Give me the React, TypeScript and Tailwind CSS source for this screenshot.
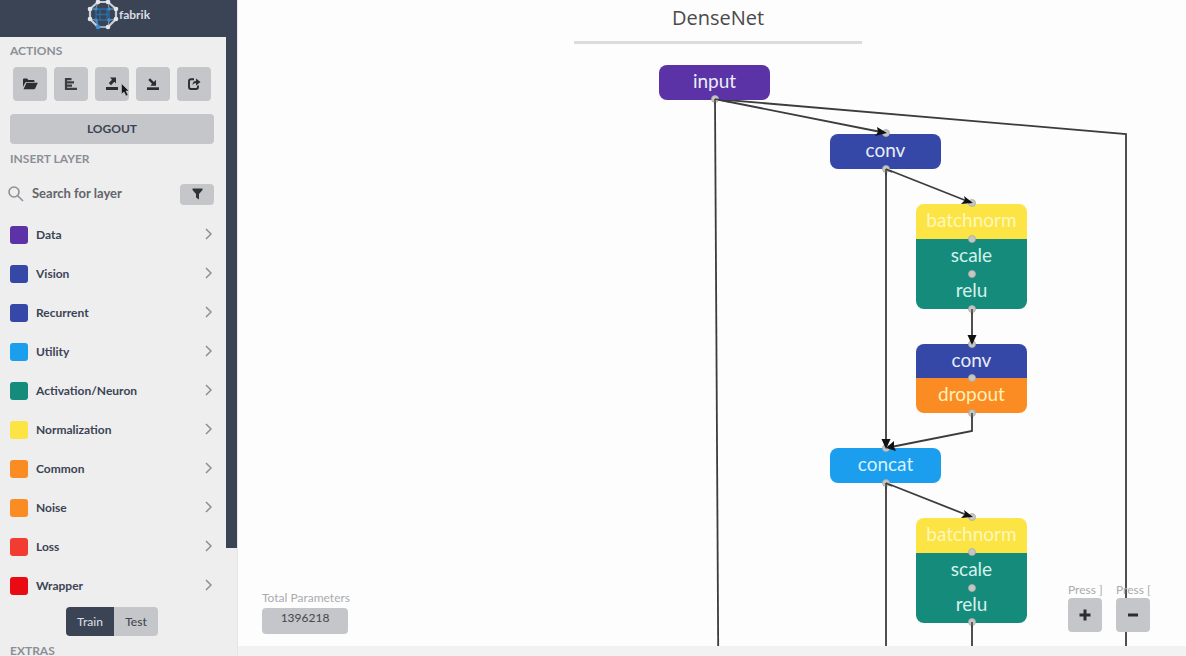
import type { ReactNode } from 'react';

const layers = [
  { name: 'Data', color: 'bg-[#5c33a6]' },
  { name: 'Vision', color: 'bg-[#3648a7]' },
  { name: 'Recurrent', color: 'bg-[#3648a7]' },
  { name: 'Utility', color: 'bg-[#1c9eee]' },
  { name: 'Activation/Neuron', color: 'bg-[#158b7c]' },
  { name: 'Normalization', color: 'bg-[#fbe444]' },
  { name: 'Common', color: 'bg-[#fb8c24]' },
  { name: 'Noise', color: 'bg-[#fb8c24]' },
  { name: 'Loss', color: 'bg-[#f23c32]' },
  { name: 'Wrapper', color: 'bg-[#ea0a14]' },
];

const nodes = [
  { label: 'input', place: 'left-[421px] top-[65px]', look: 'bg-[#5c33a6] rounded-lg text-[#e9eef8]' },
  { label: 'conv', place: 'left-[592px] top-[134px]', look: 'bg-[#3648a7] rounded-lg text-[#e9eef8]' },
  { label: 'batchnorm', place: 'left-[678px] top-[204px]', look: 'bg-[#fbe444] rounded-t-lg text-[#fff7bd]' },
  { label: 'scale', place: 'left-[678px] top-[239px]', look: 'bg-[#158b7c] text-[#d5f1ec]' },
  { label: 'relu', place: 'left-[678px] top-[274px]', look: 'bg-[#158b7c] rounded-b-lg text-[#d5f1ec]' },
  { label: 'conv', place: 'left-[678px] top-[344px]', look: 'bg-[#3648a7] rounded-t-lg text-[#e9eef8]' },
  { label: 'dropout', place: 'left-[678px] top-[378px]', look: 'bg-[#fb8c24] rounded-b-lg text-[#fff0b8]' },
  { label: 'concat', place: 'left-[592px] top-[448px]', look: 'bg-[#1c9eee] rounded-lg text-[#d8f1ff]' },
  { label: 'batchnorm', place: 'left-[678px] top-[518px]', look: 'bg-[#fbe444] rounded-t-lg text-[#fff7bd]' },
  { label: 'scale', place: 'left-[678px] top-[553px]', look: 'bg-[#158b7c] text-[#d5f1ec]' },
  { label: 'relu', place: 'left-[678px] top-[588px]', look: 'bg-[#158b7c] rounded-b-lg text-[#d5f1ec]' },
];

const ports = [
  [477, 99], [648, 133], [648, 169], [734, 203], [734, 239], [734, 274], [734, 309],
  [734, 344], [734, 378], [734, 413], [648, 448], [648, 483], [734, 517], [734, 552],
  [734, 588], [734, 622],
];

function Logo() {
  return (
    <svg width="32" height="32" viewBox="0 0 32 32" fill="none" aria-hidden="true">
      <path d="M9 10H22V21H9ZM9 15.500H22M10 21L11 27M13 10V21M20 10V21" stroke="#2a6ba6" strokeWidth="1.300" />
      <path d="M11 3H21L29 10V20L21 28M11 28L3 20V10L11 3" stroke="#c9ced6" strokeWidth="2.200" />
      <path d="M11 28H21" stroke="#9fb4c9" strokeWidth="1.800" />
      <path d="M11 3L9 10L3 10M21 3L22 10L29 10M3 20L9 21L11 28M29 20L22 21L21 28" stroke="#8c97a6" strokeWidth="1" />
      <g fill="#e4e7eb">
        <circle cx="11" cy="3" r="2.300" /><circle cx="21" cy="3" r="2.300" />
        <circle cx="29" cy="10" r="2.300" /><circle cx="29" cy="20" r="2.300" />
        <circle cx="21" cy="28" r="2.300" /><circle cx="3" cy="20" r="2.300" /><circle cx="3" cy="10" r="2.300" />
      </g>
      <g fill="#3192d8">
        <circle cx="9" cy="10" r="1.700" /><circle cx="22" cy="10" r="1.700" />
        <circle cx="9" cy="21" r="1.700" /><circle cx="22" cy="21" r="1.700" /><circle cx="11" cy="28" r="2.300" />
      </g>
    </svg>
  );
}

function FolderIcon() {
  return (
    <svg width="16" height="14" viewBox="0 0 16 14" fill="#2b2d31" aria-hidden="true">
      <path d="M1 10V2.500Q1 1.500 2 1.500H5L6.500 3H11.500Q12.500 3 12.500 4V5H4.500Q3.500 5 3 6Z" />
      <path d="M4.500 5.700H15.800L13.200 11.500Q12.800 12.300 12 12.300H1.500Z" />
    </svg>
  );
}

function AlignIcon() {
  return (
    <svg width="14" height="14" viewBox="0 0 14 14" fill="none" stroke="#3b3d41" strokeWidth="2.200" aria-hidden="true">
      <path d="M2 1V13M2 2.200H7.500M2 5.400H10M2 8.600H8M2 11.800H13" />
    </svg>
  );
}

function ExportIcon() {
  return (
    <svg width="14" height="14" viewBox="0 0 14 14" aria-hidden="true">
      <path d="M1 10H13V13H1Z" fill="#2b2d31" />
      <path d="M5 0.500H11V6.500L9.300 4.800L6 8.200L3.800 6L7 2.700Z" fill="#2b2d31" />
    </svg>
  );
}

function ImportIcon() {
  return (
    <svg width="14" height="14" viewBox="0 0 14 14" aria-hidden="true">
      <path d="M1 10.300H13V13H1Z" fill="#2b2d31" />
      <path d="M10 8.800H4.300L6 6.700L2.300 2.900L4 1.200L7.900 5L10 2.800Z" fill="#2b2d31" />
    </svg>
  );
}

function ShareIcon() {
  return (
    <svg width="14" height="14" viewBox="0 0 14 14" aria-hidden="true">
      <path d="M7 2.300H4Q2 2.300 2 4.300V10Q2 12 4 12H9Q11 12 11 10V8.500" fill="none" stroke="#2b2d31" strokeWidth="1.900" />
      <path d="M5.500 8Q5.500 4 9 4V1.500L13.500 5L9 8.500V6Q6.500 6 5.500 8Z" fill="#2b2d31" />
    </svg>
  );
}

function ActionButton({ label, children }: { label: string; children: ReactNode }) {
  return (
    <button
      type="button"
      aria-label={label}
      className="flex size-[34px] items-center justify-center rounded bg-[#c5c6ca]"
    >
      {children}
    </button>
  );
}

function Pointer() {
  return (
    <svg className="pointer-events-none absolute left-[121px] top-[83px]" width="9" height="14" viewBox="0 0 9 14" aria-hidden="true">
      <path d="M0.500 0.500L8 8H5L7 12L5 13L3 9L0.500 11Z" fill="#16181b" stroke="#d8d8da" strokeWidth="0.500" />
    </svg>
  );
}

function Sidebar() {
  return (
    <aside className="relative flex w-[238px] shrink-0 flex-col overflow-hidden border-r border-[#e6e6e6] bg-[#eeeeee] text-[#3b4454]">
      <header className="flex h-[37px] shrink-0 items-center justify-center bg-[#3b4454] pb-2 text-xs font-bold text-[#d9dde3]">
        <Logo />
        <span>fabrik</span>
      </header>
      <div className="flex min-h-0 grow">
        <div className="grow pl-2.5 pr-3">
          <h2 className="mt-1.5 text-xs font-bold leading-4 text-[#8b8f97]">ACTIONS</h2>
          <div className="mt-2 flex justify-between px-[3px]">
            <ActionButton label="Open"><FolderIcon /></ActionButton>
            <ActionButton label="Models"><AlignIcon /></ActionButton>
            <ActionButton label="Export"><ExportIcon /></ActionButton>
            <ActionButton label="Import"><ImportIcon /></ActionButton>
            <ActionButton label="Share"><ShareIcon /></ActionButton>
          </div>
          <button type="button" className="mt-[13px] h-[30px] w-full rounded bg-[#c5c6ca] text-xs font-bold">
            LOGOUT
          </button>
          <h2 className="mt-[7px] text-xs font-bold leading-4 text-[#8b8f97]">INSERT LAYER</h2>
          <div className="mt-4 flex h-[22px] items-center">
            <svg className="-ml-0.5 shrink-0" width="16" height="16" viewBox="0 0 16 16" fill="none" stroke="#8b8f97" strokeWidth="1.6" aria-hidden="true">
              <circle cx="6" cy="6" r="5" />
              <path d="M9.700 9.700L15 15" />
            </svg>
            <input
              type="text"
              aria-label="Search for layer"
              placeholder="Search for layer"
              className="ml-2 w-0 grow bg-transparent text-[13px] font-bold outline-none placeholder:text-[#62656b]"
            />
            <button type="button" aria-label="Filter" className="flex h-[21px] w-[34px] items-center justify-center rounded bg-[#c5c6ca]">
              <svg width="11" height="12" viewBox="0 0 11 12" fill="#303236" aria-hidden="true">
                <path d="M0.500 0.500H10.500V2L7 6V11.500L4 9.500V6L0.500 2Z" />
              </svg>
            </button>
          </div>
          <ul className="mt-2.5">
            {layers.map((layer) => (
              <li key={layer.name}>
                <button type="button" className="flex h-[39px] w-full items-center text-left text-xs font-bold">
                  <span className={`mr-2 size-[18px] rounded-[3px] ${layer.color}`} />
                  {layer.name}
                  <svg className="ml-auto mr-0.5" width="7" height="14" viewBox="0 0 7 14" fill="none" stroke="#8b8f97" strokeWidth="1.500" aria-hidden="true">
                    <path d="M1 1L6 6L1 11" />
                  </svg>
                </button>
              </li>
            ))}
          </ul>
          <div className="mt-0.5 flex justify-center text-xs font-medium">
            <button type="button" className="h-[29px] w-12 rounded-l bg-[#3b4454] text-[#d7dae0]">Train</button>
            <button type="button" className="h-[29px] w-11 rounded-r bg-[#c5c6ca] text-[#44474c]">Test</button>
          </div>
          <h2 className="mt-[7px] text-xs font-bold leading-4 text-[#8b8f97]">EXTRAS</h2>
        </div>
        <div className="h-[511px] w-[11px] shrink-0 bg-[#3b4454]" />
      </div>
      <Pointer />
    </aside>
  );
}

function Graph() {
  return (
    <>
      <svg className="absolute left-0 top-0 h-full w-[948px]" aria-hidden="true">
        <g fill="none" stroke="#3c3c3c" strokeWidth="1.800">
          <path d="M477 99L480.500 700" />
          <path d="M477 99L888 134V700" />
          <path d="M648 483V700" />
          <path d="M734 622V700" />
          <path d="M477 99L648 133" />
          <path d="M648 169V448" />
          <path d="M648 169L734 203" />
          <path d="M734 309V344" />
          <path d="M734 413V431L648 448" />
          <path d="M648 483L734 517" />
        </g>
      </svg>
      {nodes.map((node) => (
        <div
          key={node.place}
          className={`absolute flex h-[35px] w-[111px] items-center justify-center pb-1 text-[19px] leading-6 ${node.place} ${node.look}`}
        >
          {node.label}
        </div>
      ))}
      <svg className="absolute left-0 top-0 h-full w-[948px]" aria-hidden="true">
        {ports.map(([x, y]) => (
          <circle key={`${x}-${y}`} cx={x} cy={y} r="3.500" fill="#c6c6c3" stroke="#aaaaaa" strokeWidth="0.800" />
        ))}
        <g fill="#111">
          <path d="M639 127L649 133L637 136L640 132Z" />
          <path d="M726 196L735 203L723 204L727 200Z" />
          <path d="M726 510L735 517L723 518L727 514Z" />
          <path d="M729.500 335H738.500L734 345Z" />
          <path d="M643.500 439H652.500L648 449Z" />
          <path d="M656 441L648 448L658 451L656 447Z" />
        </g>
        <g fill="none" stroke="#3c3c3c" strokeWidth="1.500">
          <path d="M477 99V104M477 99L492 102M648 169V175M648 169L654 172M734 309V314M734 413V418M648 483V489M648 483L654 486M734 622V627" />
        </g>
      </svg>
    </>
  );
}

function ZoomControl({ hint, label, children }: { hint: string; label: string; children: ReactNode }) {
  return (
    <div className="flex w-9 flex-col">
      <span className="whitespace-nowrap text-xs leading-4 text-[#a9abaf]">{hint}</span>
      <button type="button" aria-label={label} className="flex size-[34px] items-center justify-center rounded bg-[#c5c6ca]">
        {children}
      </button>
    </div>
  );
}

export default function App() {
  return (
    <div className="flex h-screen overflow-hidden bg-[#f2f2f2] font-['Lato',sans-serif]">
      <Sidebar />
      <main className="relative mb-2.5 min-w-0 grow overflow-hidden bg-[#fdfdfd]">
        <h1 className="mx-auto w-[288px] translate-x-1.5 border-b-3 border-[#dcdcdc] pb-2.5 pt-1 text-center font-['Open_Sans',sans-serif] text-xl leading-[27px] text-[#4a4a4a]">
          DenseNet
        </h1>
        <Graph />
        <div className="absolute bottom-3 left-6 w-[86px]">
          <div className="whitespace-nowrap text-xs leading-4 text-[#a9abaf]">Total Parameters</div>
          <output className="mt-0.5 block h-[26px] rounded bg-[#c5c6ca] text-center text-xs leading-5 text-[#44474c]">
            1396218
          </output>
        </div>
        <div className="absolute bottom-3.5 right-[34px] flex gap-3">
          <ZoomControl hint="Press ]" label="Zoom in">
            <svg width="12" height="12" viewBox="0 0 12 12" stroke="#2b2d31" strokeWidth="3" aria-hidden="true">
              <path d="M6 0.500V11.500M0.500 6H11.500" />
            </svg>
          </ZoomControl>
          <ZoomControl hint="Press [" label="Zoom out">
            <svg width="12" height="12" viewBox="0 0 12 12" stroke="#2b2d31" strokeWidth="3" aria-hidden="true">
              <path d="M1 6H11" />
            </svg>
          </ZoomControl>
        </div>
      </main>
    </div>
  );
}
